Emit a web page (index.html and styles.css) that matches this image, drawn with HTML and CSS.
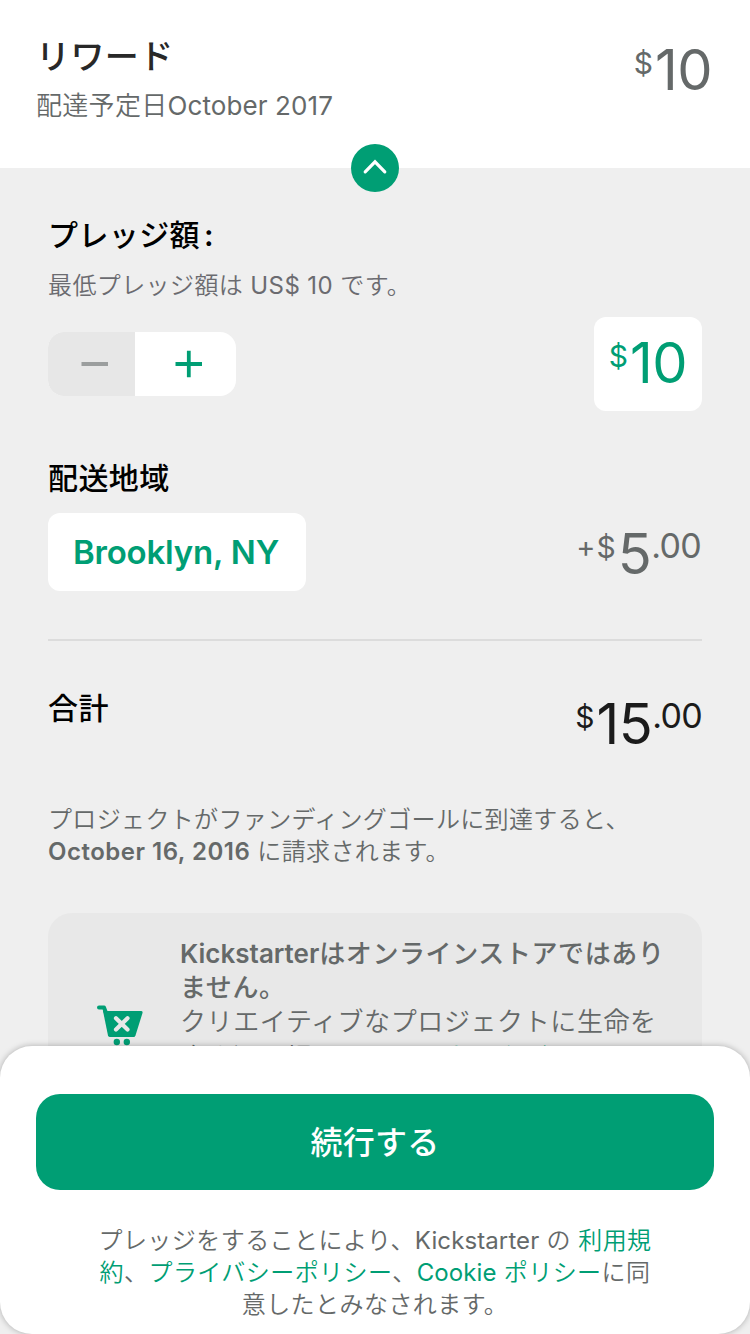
FILE: index.html
```html
<!DOCTYPE html>
<html lang="ja">
<head>
<meta charset="utf-8">
<title>リワード</title>
<link rel="stylesheet" href="styles.css">
</head>
<body>
<main class="screen">
  <header class="reward">
    <div class="reward-info">
      <h1 class="reward-title">リワード</h1>
      <p class="reward-date">配達予定日<span class="latin">October 2017</span></p>
    </div>
    <p class="price price-reward"><span class="cur">$</span><span class="num">10</span></p>
    <button class="collapse" aria-label="閉じる">
      <svg width="48" height="48" viewBox="0 0 48 48"><path d="M14.200 27.800 24 17.800 33.800 27.800" fill="none" stroke="#fff" stroke-width="3.200" stroke-linecap="round" stroke-linejoin="miter"/></svg>
    </button>
  </header>

  <section class="pledge">
    <h2 class="heading heading-pledge">プレッジ額<span class="colon">:</span></h2>
    <p class="minimum">最低プレッジ額は <span class="latin">US$ 10</span> です。</p>
    <div class="row row-amount">
      <div class="stepper">
        <button class="step step-minus" aria-label="減らす"><svg width="28" height="28" viewBox="0 0 28 28"><path d="M.5 14H27" stroke="#9b9e9e" stroke-width="3.800"/></svg></button>
        <button class="step step-plus" aria-label="増やす"><svg width="28" height="28" viewBox="0 0 28 28"><path d="M.5 14H27M13.800 .7V27.300" stroke="#009e74" stroke-width="3.800"/></svg></button>
      </div>
      <div class="amount"><p class="price price-amount"><span class="cur">$</span><span class="num">10</span></p></div>
    </div>

    <h2 class="heading heading-ship">配送地域</h2>
    <div class="row row-ship">
      <button class="place"><span class="place-name">Brooklyn, NY</span></button>
      <p class="price price-ship"><span class="plus">+</span><span class="cur">$</span><span class="num">5</span><span class="dec">.00</span></p>
    </div>

    <div class="row row-total">
      <h2 class="heading">合計</h2>
      <p class="price price-total"><span class="cur">$</span><span class="num">15</span><span class="dec">.00</span></p>
    </div>

    <p class="charge">プロジェクトがファンディングゴールに到達すると、<br><b class="charge-date">October 16, 2016</b> に請求されます。</p>

    <aside class="notice">
      <svg class="cart" width="48" height="42" viewBox="0 0 48 42">
        <path d="M3 2.500H8L10 8" fill="none" stroke="#009e74" stroke-width="4" stroke-linecap="round" stroke-linejoin="round"/>
        <path d="M7 6H45Q47 6 46.500 8L39.500 30.500Q39 32 37.500 32H14Q12.500 32 12 30.500Z" fill="#009e74"/>
        <path d="M20 13.300 31.500 24.500M31.500 13.300 20 24.500" stroke="#e8e8e8" stroke-width="4.200" stroke-linecap="round"/>
        <circle cx="20.800" cy="37" r="3.200" fill="#009e74"/><circle cx="30.800" cy="37" r="3.200" fill="#009e74"/>
      </svg>
      <div class="notice-text">
        <p class="notice-line strong"><b class="kick">Kickstarter</b>はオンラインストアではあり</p>
        <p class="notice-line strong">ません。</p>
        <p class="notice-line">クリエイティブなプロジェクトに生命を</p>
        <p class="notice-line notice-more">吹き込む場です。<a class="link">アカウンタビリティ</a></p>
      </div>
    </aside>
  </section>

  <footer class="sheet">
    <button class="continue">続行する</button>
    <p class="terms">
      <span class="terms-line">プレッジをすることにより、<span class="latin">Kickstarter</span> の <a class="link">利用規</a></span>
      <span class="terms-line"><a class="link">約</a>、<a class="link">プライバシーポリシー</a>、<a class="link"><span class="latin">Cookie</span> ポリシー</a>に同</span>
      <span class="terms-line">意したとみなされます。</span>
    </p>
  </footer>
</main>
</body>
</html>
```
FILE: styles.css
```css
* { box-sizing: border-box; margin: 0; padding: 0; }
body { background: #efefef; font-family: Inter, "Noto Sans CJK JP", sans-serif; color: #656969; }
button { border: 0; background: none; font: inherit; color: inherit; display: block; }
svg { display: block; }
.latin { font-weight: 400; }
.link { color: #009e74; }
.screen { position: relative; width: 750px; height: 1334px; overflow: hidden; background: #efefef; }

.reward { position: relative; height: 168px; background: #fff; display: flex; justify-content: space-between; padding: 32px 39px 0 36px; }
.reward-title { font-size: 34px; line-height: 49px; font-weight: 500; letter-spacing: .4px; color: #282828; }
.reward-date { font-size: 26px; line-height: 36px; margin-top: 7px; font-weight: 350; letter-spacing: .3px; white-space: nowrap; }
.reward-date .latin { letter-spacing: .1px; }
.collapse { position: absolute; left: 351px; top: 144px; width: 48px; height: 48px; border-radius: 50%; background: #009e74; }

.price { display: flex; align-items: flex-start; white-space: nowrap; height: 56px; font-weight: 400; }
.price .num { font-size: 56px; line-height: 56px; margin-top: 1px; letter-spacing: -.5px; }
.price .cur { font-size: 30px; line-height: 32px; margin-top: 6px; margin-right: 2px; }
.price .plus { font-size: 29px; line-height: 32px; margin-top: 6px; margin-right: 1px; }
.price .dec { font-size: 34px; line-height: 34px; margin-top: 4px; letter-spacing: -.7px; }
.price-reward { margin-top: 9px; margin-right: -1px; }

.pledge { padding: 43px 48px 0; }
.heading { font-size: 30px; line-height: 48px; font-weight: 500; color: #000; letter-spacing: .4px; }
.colon { margin-left: 4px; font-weight: 600; }
.minimum { font-size: 24px; line-height: 34px; margin-top: 10px; color: #6b6b70; letter-spacing: .4px; font-weight: 350; }
.row { display: flex; justify-content: space-between; }
.row-amount { margin-top: 14px; height: 94px; align-items: center; }
.stepper { display: flex; width: 188px; height: 64px; border-radius: 16px; overflow: hidden; background: #fff; }
.step { display: flex; align-items: center; justify-content: center; height: 64px; }
.step-minus { width: 87px; background: #e7e7e7; padding-left: 7px; }
.step-plus { width: 101px; padding-left: 7px; }
.amount { width: 108px; height: 94px; border-radius: 12px; background: #fff; padding: 17px 15px 0 14px; display: flex; justify-content: flex-end; }
.price-amount { color: #009e74; }
.heading-ship { margin-top: 43px; }
.row-ship { margin-top: 11px; height: 128px; border-bottom: 2px solid #dcdcdc; }
.place { width: 258px; height: 78px; border-radius: 12px; background: #fff; color: #009e74; font-size: 33px; line-height: 78px; font-weight: 600; letter-spacing: -.2px; padding-left: 25px; text-align: left; }
.price-ship { margin-top: 12px; margin-right: 1px; }
.row-total { margin-top: 43px; height: 78px; }
.price-total { margin-top: 11px; color: #1b1b1b; }
.charge { margin-top: 42px; font-size: 24px; line-height: 32px; height: 64px; letter-spacing: .35px; white-space: nowrap; font-weight: 350; }
.charge-date { font-weight: 600; letter-spacing: .5px; }
.notice { margin-top: 45px; height: 220px; border-radius: 24px; background: #e8e8e8; display: flex; padding: 24px 0 0 48px; }
.cart { margin-top: 68px; flex: none; }
.notice-text { margin-left: 36px; font-size: 26px; line-height: 34px; letter-spacing: .6px; white-space: nowrap; font-weight: 350; }
.strong { font-weight: 500; }
.kick { font-weight: 600; letter-spacing: 0; }
.notice-more { margin-top: 2px; }

.sheet { position: absolute; left: 0; top: 1046px; width: 750px; height: 288px; border-radius: 32px; background: #fff; box-shadow: 0 0 6px rgba(0,0,0,.28); padding: 48px 36px 0; }
.continue { width: 678px; height: 96px; border-radius: 24px; background: #009e74; color: #fff; font-size: 32px; line-height: 97px; font-weight: 500; letter-spacing: .2px; text-align: center; }
.terms { margin-top: 35px; font-size: 24px; font-weight: 350; text-align: center; }
.terms-line { display: block; line-height: 32px; letter-spacing: .45px; white-space: nowrap; }
.terms .latin { letter-spacing: .1px; }
```
